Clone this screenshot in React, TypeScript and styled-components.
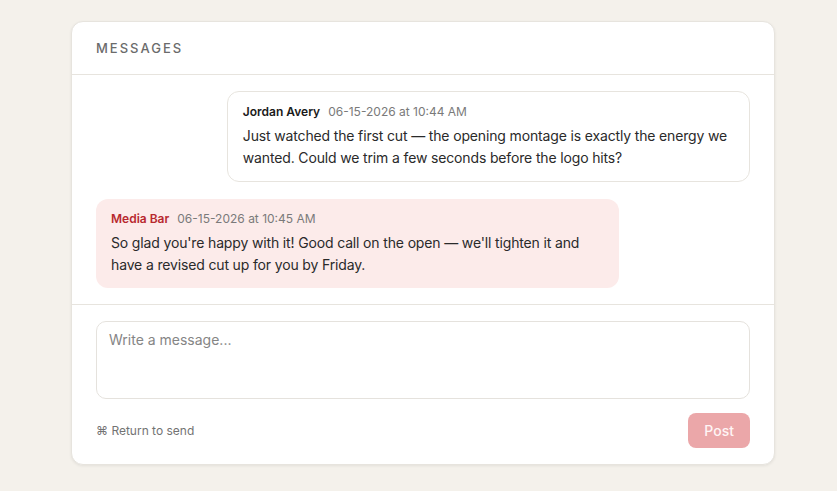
import React from "react";
import styled, { createGlobalStyle } from "styled-components";

const Global = createGlobalStyle`
  html, body { margin: 0; padding: 0; background: #f4f1eb; }
  body { font-family: Inter, "Noto Sans", "Liberation Sans", sans-serif; -webkit-font-smoothing: antialiased; }
  * { box-sizing: border-box; }
`;

const Page = styled.div`
  min-height: 491px;
  padding: 21px 0 0 71px;
`;

const Card = styled.section`
  width: 704px;
  background: #ffffff;
  border: 1px solid #e7e4de;
  border-radius: 12px;
  box-shadow: 0 1px 3px rgba(0, 0, 0, 0.07);
  display: flex;
  flex-direction: column;
  overflow: hidden;
`;

const Header = styled.header`
  padding: 16px 24px 16px;
  border-bottom: 1px solid #e7e4de;
  font-size: 13px;
  line-height: 20px;
  font-weight: 500;
  letter-spacing: 2px;
  color: #6b6b6b;
  text-transform: uppercase;
`;

const Thread = styled.div`
  padding: 16px 24px 16px;
  display: flex;
  flex-direction: column;
  gap: 17px;
  border-bottom: 1px solid #e7e4de;
`;

const Bubble = styled.div<{ $mine?: boolean }>`
  align-self: ${(p) => (p.$mine ? "flex-start" : "flex-end")};
  max-width: 80%;
  padding: 11px 15px;
  border-radius: 12px;
  background: ${(p) => (p.$mine ? "#fcebea" : "#ffffff")};
  border: ${(p) => (p.$mine ? "none" : "1px solid #e7e4de")};
`;

const Meta = styled.div`
  display: flex;
  align-items: baseline;
  gap: 8px;
  font-size: 12px;
  line-height: 18px;
`;

const Author = styled.span<{ $mine?: boolean }>`
  font-weight: 600;
  color: ${(p) => (p.$mine ? "#b8292f" : "#1a1a1a")};
`;

const Time = styled.span`
  color: #7a7a7a;
`;

const Body = styled.p`
  margin: 4px 0 0;
  font-size: 14px;
  line-height: 22.4px;
  letter-spacing: -0.15px;
  color: #2a2a2a;
`;

const Composer = styled.div`
  padding: 16px 24px 16px;
  display: flex;
  flex-direction: column;
  gap: 14px;
`;

const Input = styled.textarea`
  display: block;
  width: 100%;
  height: 78px;
  resize: none;
  border: 1px solid #e5e2dd;
  border-radius: 10px;
  padding: 8px 12px;
  font-family: inherit;
  font-size: 14px;
  line-height: 20px;
  color: #2a2a2a;
  outline: none;
  &::placeholder { color: #858585; }
`;

const Footer = styled.div`
  display: flex;
  align-items: center;
  justify-content: space-between;
`;

const Hint = styled.span`
  font-size: 12px;
  color: #737373;
`;

const PostButton = styled.button`
  height: 35px;
  padding: 0 16px;
  border: none;
  border-radius: 8px;
  background: #eba7a9;
  color: #fff5f5;
  font-family: inherit;
  font-size: 14px;
  font-weight: 500;
  cursor: not-allowed;
`;

const messages = [
  {
    author: "Jordan Avery",
    time: "06-15-2026 at 10:44 AM",
    text: "Just watched the first cut — the opening montage is exactly the energy we wanted. Could we trim a few seconds before the logo hits?",
    mine: false,
  },
  {
    author: "Media Bar",
    time: "06-15-2026 at 10:45 AM",
    text: "So glad you're happy with it! Good call on the open — we'll tighten it and have a revised cut up for you by Friday.",
    mine: true,
  },
];

export default function App() {
  return (
    <Page>
      <Global />
      <Card>
        <Header>Messages</Header>
        <Thread>
          {messages.map((m) => (
            <Bubble key={m.time} $mine={m.mine}>
              <Meta>
                <Author $mine={m.mine}>{m.author}</Author>
                <Time>{m.time}</Time>
              </Meta>
              <Body>{m.text}</Body>
            </Bubble>
          ))}
        </Thread>
        <Composer>
          <Input placeholder="Write a message..." />
          <Footer>
            <Hint>⌘ Return to send</Hint>
            <PostButton disabled>Post</PostButton>
          </Footer>
        </Composer>
      </Card>
    </Page>
  );
}
